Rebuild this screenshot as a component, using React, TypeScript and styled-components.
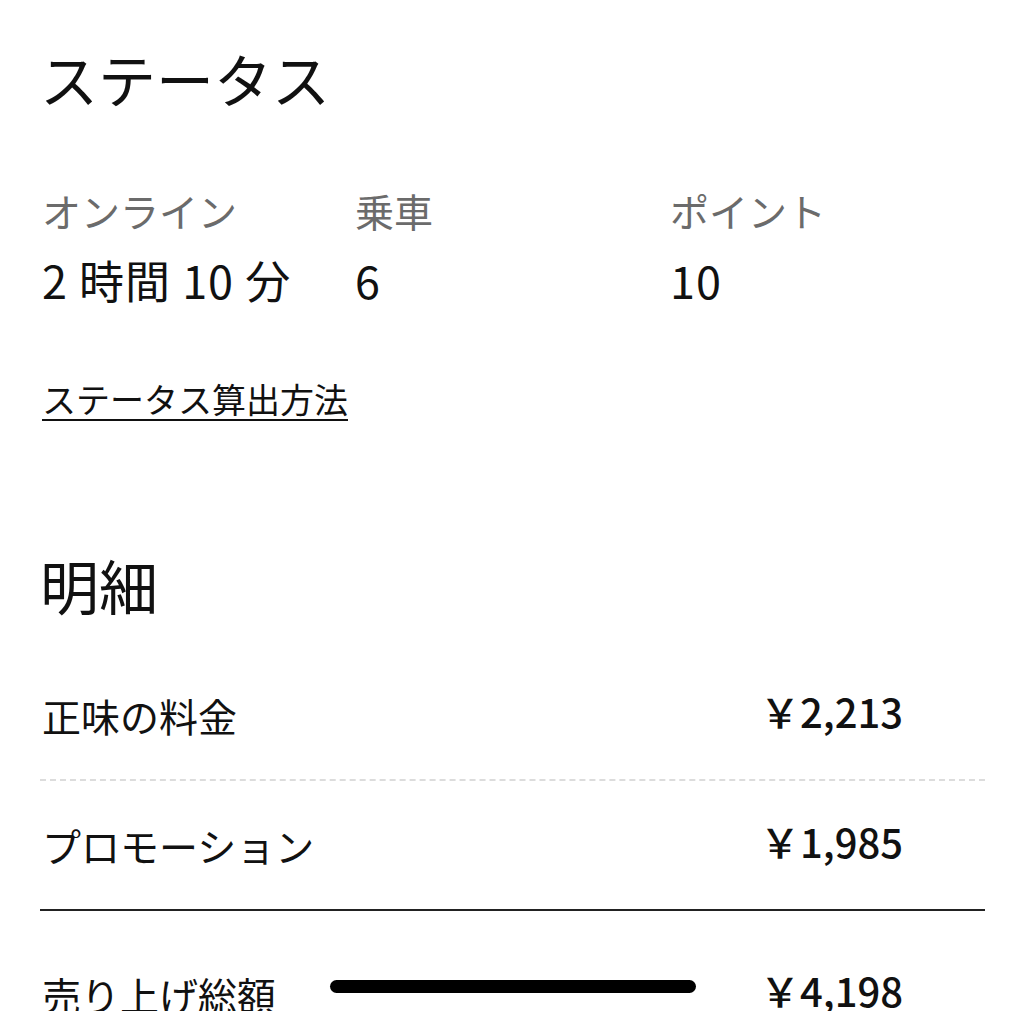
import React from 'react'
import styled, { createGlobalStyle } from 'styled-components'

const GlobalStyle = createGlobalStyle`
  html, body {
    margin: 0;
    padding: 0;
    background: #ffffff;
  }
  body {
    font-family: "Noto Sans CJK JP", "Noto Sans", sans-serif;
    color: #111111;
  }
`

const Page = styled.div`
  position: relative;
  width: 1024px;
  height: 1011px;
  overflow: hidden;
  box-sizing: border-box;
  padding: 40px 39px 0 40px;
`

const Heading = styled.h1`
  margin: 0;
  font-size: 58px;
  font-weight: 400;
  line-height: 76px;
`

const StatGrid = styled.div`
  display: grid;
  grid-template-columns: 313px 315px 1fr;
  margin-top: 66px;
  padding-left: 2px;
`

const Stat = styled.div`
  display: flex;
  flex-direction: column;
`

const StatLabel = styled.span`
  font-size: 39px;
  line-height: 56px;
  color: #6b6b6b;
`

const StatValue = styled.span`
  margin-top: 12px;
  font-size: 45px;
  line-height: 60px;
  color: #111111;
  white-space: nowrap;
  letter-spacing: 1px;
`

const HowLink = styled.a`
  display: inline-block;
  margin-top: 64px;
  padding-left: 2px;
  font-size: 34px;
  line-height: 50px;
  color: #111111;
  text-decoration: underline;
  text-underline-offset: 6px;
  text-decoration-thickness: 2px;
`

const SubHeading = styled.h2`
  margin: 123px 0 0;
  font-size: 59px;
  font-weight: 400;
  line-height: 76px;
`

type Border = 'dashed' | 'solid' | 'none'

const Row = styled.div<{ $border: Border; $tall?: boolean }>`
  display: grid;
  grid-template-columns: 720px 1fr;
  align-items: center;
  height: ${p => (p.$tall ? '166px' : '130px')};
  border-bottom: ${p =>
    p.$border === 'dashed'
      ? '2px dashed #dcdcdc'
      : p.$border === 'solid'
      ? '2px solid #222222'
      : 'none'};
  box-sizing: border-box;
`

const RowLabel = styled.span`
  padding-left: 2px;
  font-size: 39px;
  color: #111111;
`

const RowValue = styled.span`
  margin-top: -8px;
  font-size: 40px;
  font-weight: 500;
  color: #111111;
`

const Rows = styled.div`
  margin-top: 28px;
`

const HomeIndicator = styled.div`
  position: absolute;
  left: 330px;
  top: 980px;
  width: 366px;
  height: 13px;
  border-radius: 7px;
  background: #000000;
`

const stats = [
  { label: 'オンライン', value: '2 時間 10 分' },
  { label: '乗車', value: '6' },
  { label: 'ポイント', value: '10' },
]

const breakdown: { label: string; value: string; border: Border }[] = [
  { label: '正味の料金', value: '￥2,213', border: 'dashed' },
  { label: 'プロモーション', value: '￥1,985', border: 'solid' },
  { label: '売り上げ総額', value: '￥4,198', border: 'none' },
]

export default function App() {
  return (
    <Page>
      <GlobalStyle />
      <Heading>ステータス</Heading>
      <StatGrid>
        {stats.map(s => (
          <Stat key={s.label}>
            <StatLabel>{s.label}</StatLabel>
            <StatValue>{s.value}</StatValue>
          </Stat>
        ))}
      </StatGrid>
      <HowLink>ステータス算出方法</HowLink>
      <SubHeading>明細</SubHeading>
      <Rows>
        {breakdown.map((r, i) => (
          <Row key={r.label} $border={r.border} $tall={i === breakdown.length - 1}>
            <RowLabel>{r.label}</RowLabel>
            <RowValue>{r.value}</RowValue>
          </Row>
        ))}
      </Rows>
      <HomeIndicator />
    </Page>
  )
}
